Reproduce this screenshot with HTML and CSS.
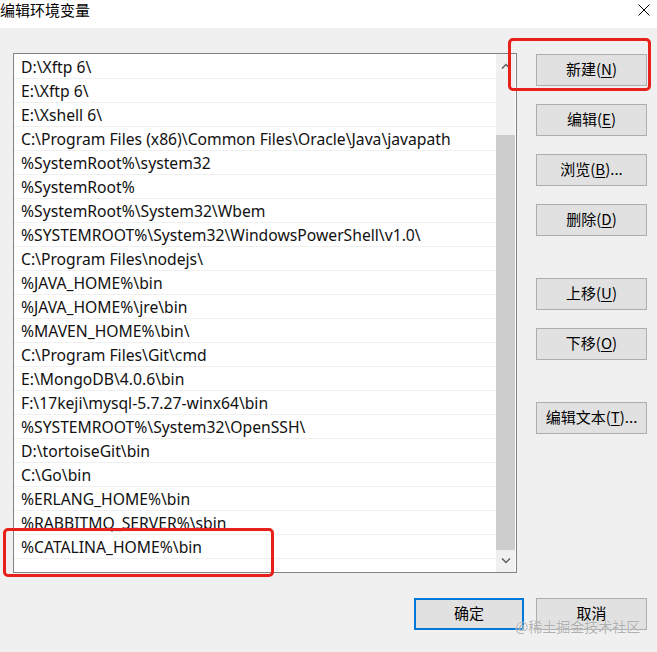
FILE: index.html
```html
<!DOCTYPE html>
<html lang="zh-CN">
<head>
    <meta charset="UTF-8">
    <title>编辑环境变量</title>
    <link rel="stylesheet" href="styles.css">
</head>
<body>
    <!-- Title bar -->
    <div class="titlebar">
        <span class="title-text">编辑环境变量</span>
        <svg class="close-icon" width="12" height="12" viewBox="0 0 12 12">
            <path d="M0.5 0.5 L11.5 11.5 M11.5 0.5 L0.5 11.5" stroke="#000" stroke-width="1" fill="none"/>
        </svg>
    </div>

    <div class="dialog">
        <div class="main">
            <!-- Path list -->
            <div class="path-list">
                <div class="rows">
                    <div class="row">D:\Xftp 6\</div>
                    <div class="row">E:\Xftp 6\</div>
                    <div class="row">E:\Xshell 6\</div>
                    <div class="row">C:\Program Files (x86)\Common Files\Oracle\Java\javapath</div>
                    <div class="row">%SystemRoot%\system32</div>
                    <div class="row">%SystemRoot%</div>
                    <div class="row">%SystemRoot%\System32\Wbem</div>
                    <div class="row">%SYSTEMROOT%\System32\WindowsPowerShell\v1.0\</div>
                    <div class="row">C:\Program Files\nodejs\</div>
                    <div class="row">%JAVA_HOME%\bin</div>
                    <div class="row">%JAVA_HOME%\jre\bin</div>
                    <div class="row">%MAVEN_HOME%\bin\</div>
                    <div class="row">C:\Program Files\Git\cmd</div>
                    <div class="row">E:\MongoDB\4.0.6\bin</div>
                    <div class="row">F:\17keji\mysql-5.7.27-winx64\bin</div>
                    <div class="row">%SYSTEMROOT%\System32\OpenSSH\</div>
                    <div class="row">D:\tortoiseGit\bin</div>
                    <div class="row">C:\Go\bin</div>
                    <div class="row">%ERLANG_HOME%\bin</div>
                    <div class="row">%RABBITMQ_SERVER%\sbin</div>
                    <div class="row">%CATALINA_HOME%\bin</div>
                    <div class="row"></div>
                </div>
                <div class="scrollbar">
                    <div class="scroll-arrow scroll-up">
                        <svg width="10" height="6" viewBox="0 0 10 6"><path d="M1 5.5 L5 1.5 L9 5.5" stroke="#606060" stroke-width="1.5" fill="none"/></svg>
                    </div>
                    <div class="scroll-track"></div>
                    <div class="scroll-thumb"></div>
                    <div class="scroll-arrow scroll-down">
                        <svg width="10" height="6" viewBox="0 0 10 6"><path d="M1 0.5 L5 4.5 L9 0.5" stroke="#606060" stroke-width="1.5" fill="none"/></svg>
                    </div>
                </div>
            </div>

            <!-- Side buttons -->
            <div class="side-buttons">
                <button class="win-btn">新建(<u>N</u>)</button>
                <button class="win-btn">编辑(<u>E</u>)</button>
                <button class="win-btn">浏览(<u>B</u>)...</button>
                <button class="win-btn">删除(<u>D</u>)</button>
                <button class="win-btn btn-group-start">上移(<u>U</u>)</button>
                <button class="win-btn">下移(<u>O</u>)</button>
                <button class="win-btn btn-group-start">编辑文本(<u>T</u>)...</button>
            </div>
        </div>

        <!-- Footer buttons -->
        <div class="footer">
            <button class="win-btn win-btn-default">确定</button>
            <button class="win-btn">取消</button>
        </div>
    </div>

    <!-- Annotations -->
    <div class="mark mark-new"></div>
    <div class="mark mark-row"></div>
    <div class="watermark">@稀土掘金技术社区</div>
</body>
</html>
```

FILE: styles.css
```css
* {
    margin: 0;
    padding: 0;
    box-sizing: border-box;
}

body {
    width: 657px;
    height: 652px;
    overflow: hidden;
    background: #f0f0f0;
    font-family: "Noto Sans", "Noto Sans CJK SC", sans-serif;
    font-size: 15px;
    color: #000;
    position: relative;
}

/* Title bar */
.titlebar {
    height: 28px;
    background: #fff;
    display: flex;
    align-items: center;
    justify-content: space-between;
    padding: 0 7px 8px 0;
}

.title-text {
    font-family: "Noto Sans CJK SC", sans-serif;
    font-size: 15px;
    line-height: 20px;
}

.close-icon {
    display: block;
}

/* Dialog body */
.dialog {
    padding: 25px 10px 0 13px;
}

.main {
    display: flex;
    gap: 19px;
}

.path-list {
    width: 504px;
    height: 520px;
    background: #fff;
    border: 1px solid #828282;
    padding: 1px 1px 0 0;
    display: flex;
    overflow: hidden;
}

.rows {
    flex: 1;
    overflow: hidden;
}

.row {
    height: 24px;
    border-bottom: 1px solid #f0f0f0;
    padding-left: 7px;
    font-size: 15.7px;
    line-height: 24px;
    white-space: nowrap;
    color: #111;
}

.scrollbar {
    width: 19px;
    margin-top: -1px;
    background: #f0f0f0;
    display: flex;
    flex-direction: column;
}

.scroll-arrow {
    display: flex;
    justify-content: center;
    align-items: center;
}

.scroll-up {
    height: 21px;
    padding-top: 2px;
}

.scroll-track {
    height: 60px;
}

.scroll-thumb {
    height: 415px;
    background: #cdcdcd;
}

.scroll-down {
    flex: 1;
}

/* Buttons */
.side-buttons {
    display: flex;
    flex-direction: column;
    gap: 18px;
    padding-top: 1px;
}

.win-btn {
    width: 111px;
    height: 32px;
    background: #e1e1e1;
    border: 1px solid #adadad;
    font-family: "Noto Sans CJK SC", sans-serif;
    font-size: 15px;
    line-height: 20px;
    padding-bottom: 2px;
    color: #000;
}

.win-btn u {
    text-decoration-thickness: 1px;
    text-underline-offset: 2px;
}

.btn-group-start {
    margin-top: 24px;
}

.footer {
    display: flex;
    justify-content: flex-end;
    gap: 12px;
    padding-top: 25px;
}

.win-btn-default {
    width: 110px;
    border: 2px solid #0078d7;
}

/* Red annotation boxes */
.mark {
    position: absolute;
    border: 3px solid #e8201c;
    border-radius: 5px;
}

.mark-new {
    left: 508px;
    top: 38px;
    width: 143px;
    height: 53px;
}

.mark-row {
    left: 3px;
    top: 528px;
    width: 271px;
    height: 49px;
}

.watermark {
    position: absolute;
    left: 515px;
    top: 616px;
    font-family: "Noto Sans CJK SC", sans-serif;
    font-size: 14px;
    line-height: 20px;
    color: rgba(150, 150, 150, 0.75);
    text-shadow: 0 0 1px #fff;
}
```
